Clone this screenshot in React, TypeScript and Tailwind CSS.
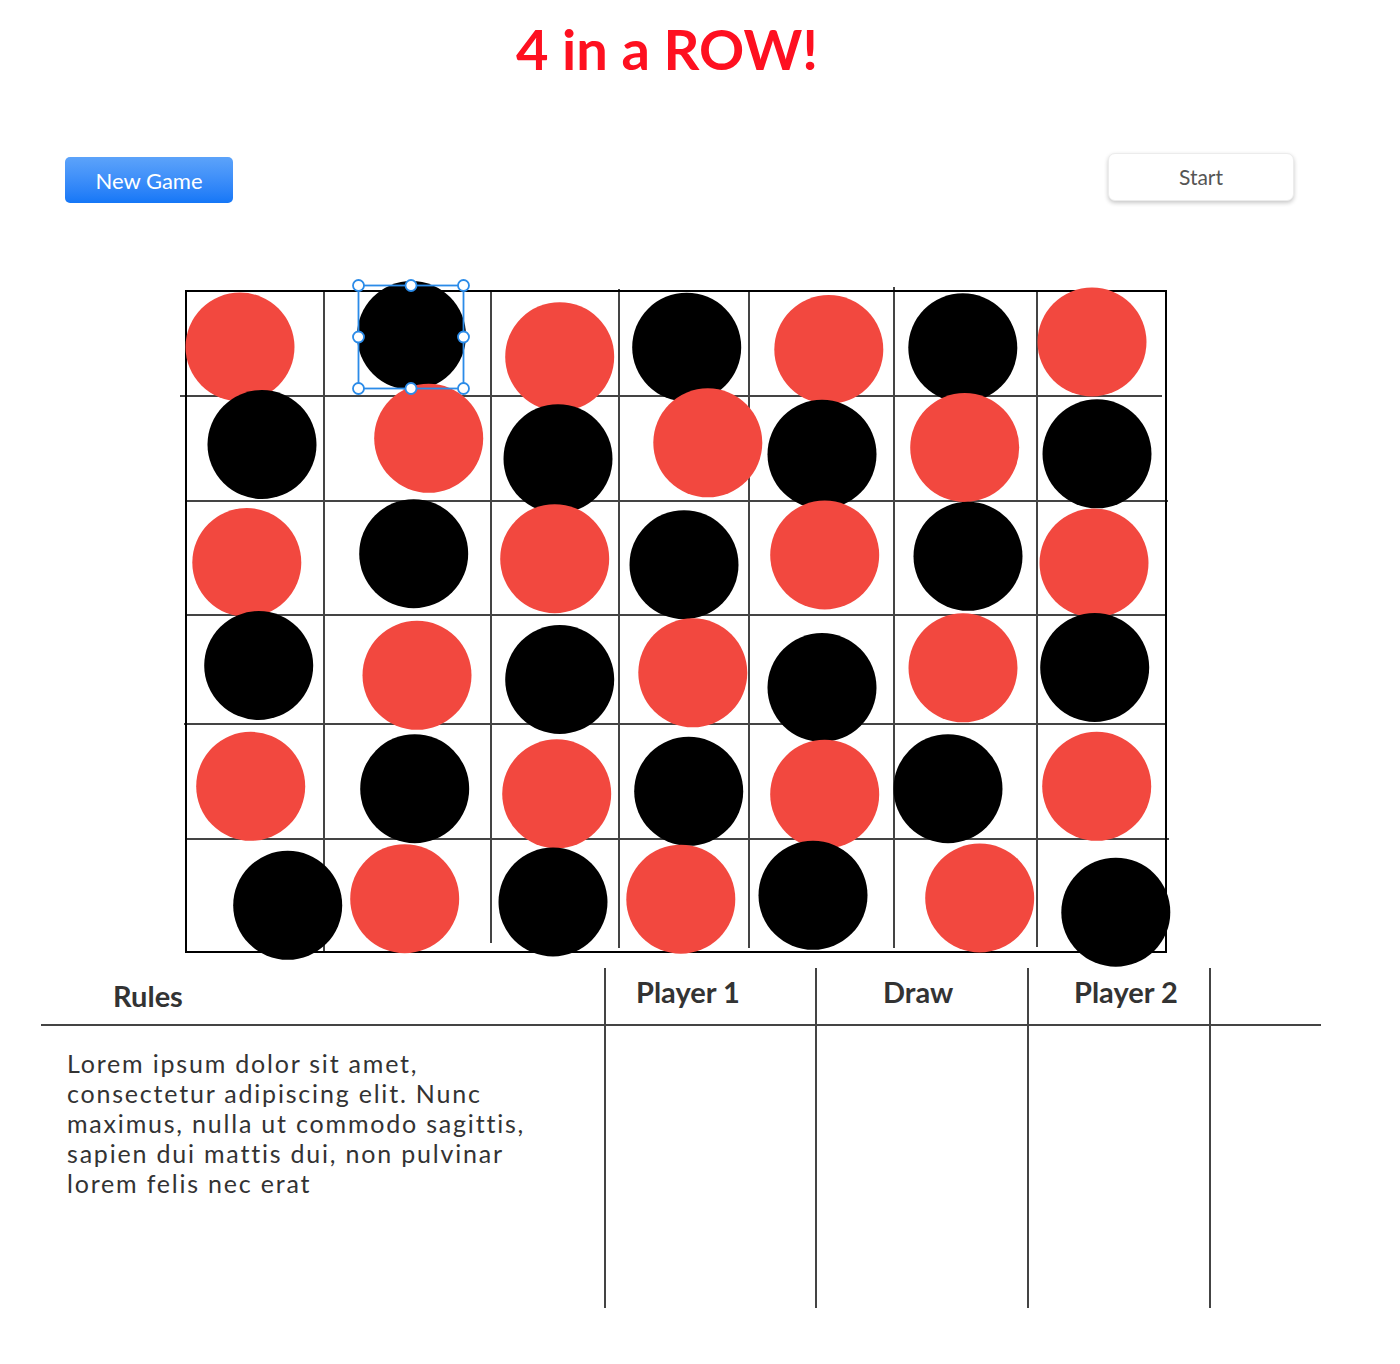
import React from "react";

type C = [number, number, "r" | "b"];

const circles: C[] = [
  // row 1
  [240, 347, "r"],
  [411.5, 335.5, "b"],
  [559.7, 356.7, "r"],
  [686.7, 347.2, "b"],
  [828.8, 349.5, "r"],
  [962.8, 347.8, "b"],
  [1092, 342, "r"],
  // row 2
  [262, 444.5, "b"],
  [428.7, 438.3, "r"],
  [558, 458.7, "b"],
  [707.8, 442.8, "r"],
  [822, 454.3, "b"],
  [964.7, 447.5, "r"],
  [1097, 453.8, "b"],
  // row 3
  [246.8, 562.5, "r"],
  [413.7, 553.7, "b"],
  [554.7, 558.7, "r"],
  [684, 564.7, "b"],
  [824.7, 555, "r"],
  [968, 556.3, "b"],
  [1094, 563, "r"],
  // row 4
  [258.7, 665.5, "b"],
  [417, 675.3, "r"],
  [559.7, 679.5, "b"],
  [692.8, 672.8, "r"],
  [822, 687.5, "b"],
  [963, 667.8, "r"],
  [1094.7, 667.5, "b"],
  // row 5
  [250.7, 786.3, "r"],
  [414.7, 788.7, "b"],
  [556.7, 793.8, "r"],
  [688.7, 791.3, "b"],
  [824.7, 794.2, "r"],
  [948, 788.7, "b"],
  [1096.7, 786.3, "r"],
  // row 6
  [287.7, 905.3, "b"],
  [404.7, 898.7, "r"],
  [553, 902, "b"],
  [680.8, 899.2, "r"],
  [813, 895.3, "b"],
  [979.7, 898, "r"],
  [1115.8, 912.2, "b"],
];

const vLines: [number, number, number][] = [
  [324, 291, 953],
  [491, 291, 943],
  [619, 289, 948],
  [749, 291, 948],
  [894, 287, 948],
  [1037, 291, 947],
];

const hLines: [number, number, number][] = [
  [396, 180, 1162],
  [501, 186, 1168],
  [615, 186, 1166],
  [724, 184, 1166],
  [839, 186, 1169],
];

const BLUE = "#2b8be8";

function Board() {
  const x1 = 358.5,
    x2 = 463.5,
    y1 = 285.5,
    y2 = 388.5;
  const xm = (x1 + x2) / 2,
    ym = (y1 + y2) / 2;
  const handles: [number, number][] = [
    [x1, y1],
    [xm, y1],
    [x2, y1],
    [x1, ym],
    [x2, ym],
    [x1, y2],
    [xm, y2],
    [x2, y2],
  ];
  return (
    <svg
      className="block ml-[170px] mt-[75px]"
      width={1010}
      height={690}
      viewBox="170 278 1010 690"
    >
      {vLines.map(([x, a, b], i) => (
        <line key={"v" + i} x1={x} y1={a} x2={x} y2={b} stroke="#444" strokeWidth={2} />
      ))}
      {hLines.map(([y, a, b], i) => (
        <line key={"h" + i} x1={a} y1={y} x2={b} y2={y} stroke="#444" strokeWidth={2} />
      ))}
      <rect x={186} y={291} width={980} height={661} fill="none" stroke="#000" strokeWidth={2} />
      {circles.map(([cx, cy, c], i) => (
        <circle key={"c" + i} cx={cx} cy={cy} r={54.5} fill={c === "r" ? "#f2483f" : "#000"} />
      ))}
      <rect x={x1} y={y1} width={x2 - x1} height={y2 - y1} fill="none" stroke={BLUE} strokeWidth={1.8} />
      {handles.map(([hx, hy], i) => (
        <circle key={"k" + i} cx={hx} cy={hy} r={5.5} fill="#fff" stroke={BLUE} strokeWidth={1.8} />
      ))}
    </svg>
  );
}

export default function App() {
  return (
    <div className="w-[1400px] h-[1364px] bg-white font-['Lato',sans-serif] overflow-hidden">
      <div className="pt-[20px] pl-[516px]">
        <h1 className="text-[56px] leading-[57px] font-bold text-[#fe1020] whitespace-nowrap">
          4 in a ROW!
        </h1>
      </div>
      <div className="mt-[76px] flex justify-between items-start pl-[65px] pr-[106px]">
        <button className="mt-[4px] w-[168px] h-[46px] rounded-[5px] bg-linear-to-b from-[#5ca3fa] to-[#1477f7] text-white text-[22px] leading-[48px]">
          New Game
        </button>
        <button className="w-[186px] h-[48px] rounded-[7px] bg-white border border-[#ececec] shadow-[0_2px_4px_rgba(0,0,0,0.22)] text-[#555] text-[21px] leading-[46px]">
          Start
        </button>
      </div>
      <Board />
      <div className="ml-[41px] flex w-[1280px] text-[#333]">
        <div className="w-[563px]">
          <div className="h-[58px] border-b-2 border-[#444] pl-[72px] pt-[13px] text-[29px] leading-[30px] font-bold">
            Rules
          </div>
          <div className="h-[282px] pl-[26px] pt-[22px]">
            <p className="text-[25px] leading-[30px] tracking-[1.8px] whitespace-nowrap">
              Lorem ipsum dolor sit amet,
              <br />
              consectetur adipiscing elit. Nunc
              <br />
              maximus, nulla ut commodo sagittis,
              <br />
              sapien dui mattis dui, non pulvinar
              <br />
              lorem felis nec erat
            </p>
          </div>
        </div>
        <div className="w-[211px] border-l-2 border-[#444]">
          <div className="h-[58px] border-b-2 border-[#444] pl-[30px] pt-[9px] text-[29px] leading-[30px] font-bold whitespace-nowrap">
            Player 1
          </div>
          <div className="h-[282px]" />
        </div>
        <div className="w-[212px] border-l-2 border-[#444]">
          <div className="h-[58px] border-b-2 border-[#444] pl-[66px] pt-[9px] text-[29px] leading-[30px] font-bold whitespace-nowrap">
            Draw
          </div>
          <div className="h-[282px]" />
        </div>
        <div className="w-[182px] border-l-2 border-[#444]">
          <div className="h-[58px] border-b-2 border-[#444] pl-[45px] pt-[9px] text-[29px] leading-[30px] font-bold whitespace-nowrap">
            Player 2
          </div>
          <div className="h-[282px]" />
        </div>
        <div className="w-[112px] border-l-2 border-[#444]">
          <div className="h-[58px] border-b-2 border-[#444]" />
          <div className="h-[282px]" />
        </div>
      </div>
    </div>
  );
}
